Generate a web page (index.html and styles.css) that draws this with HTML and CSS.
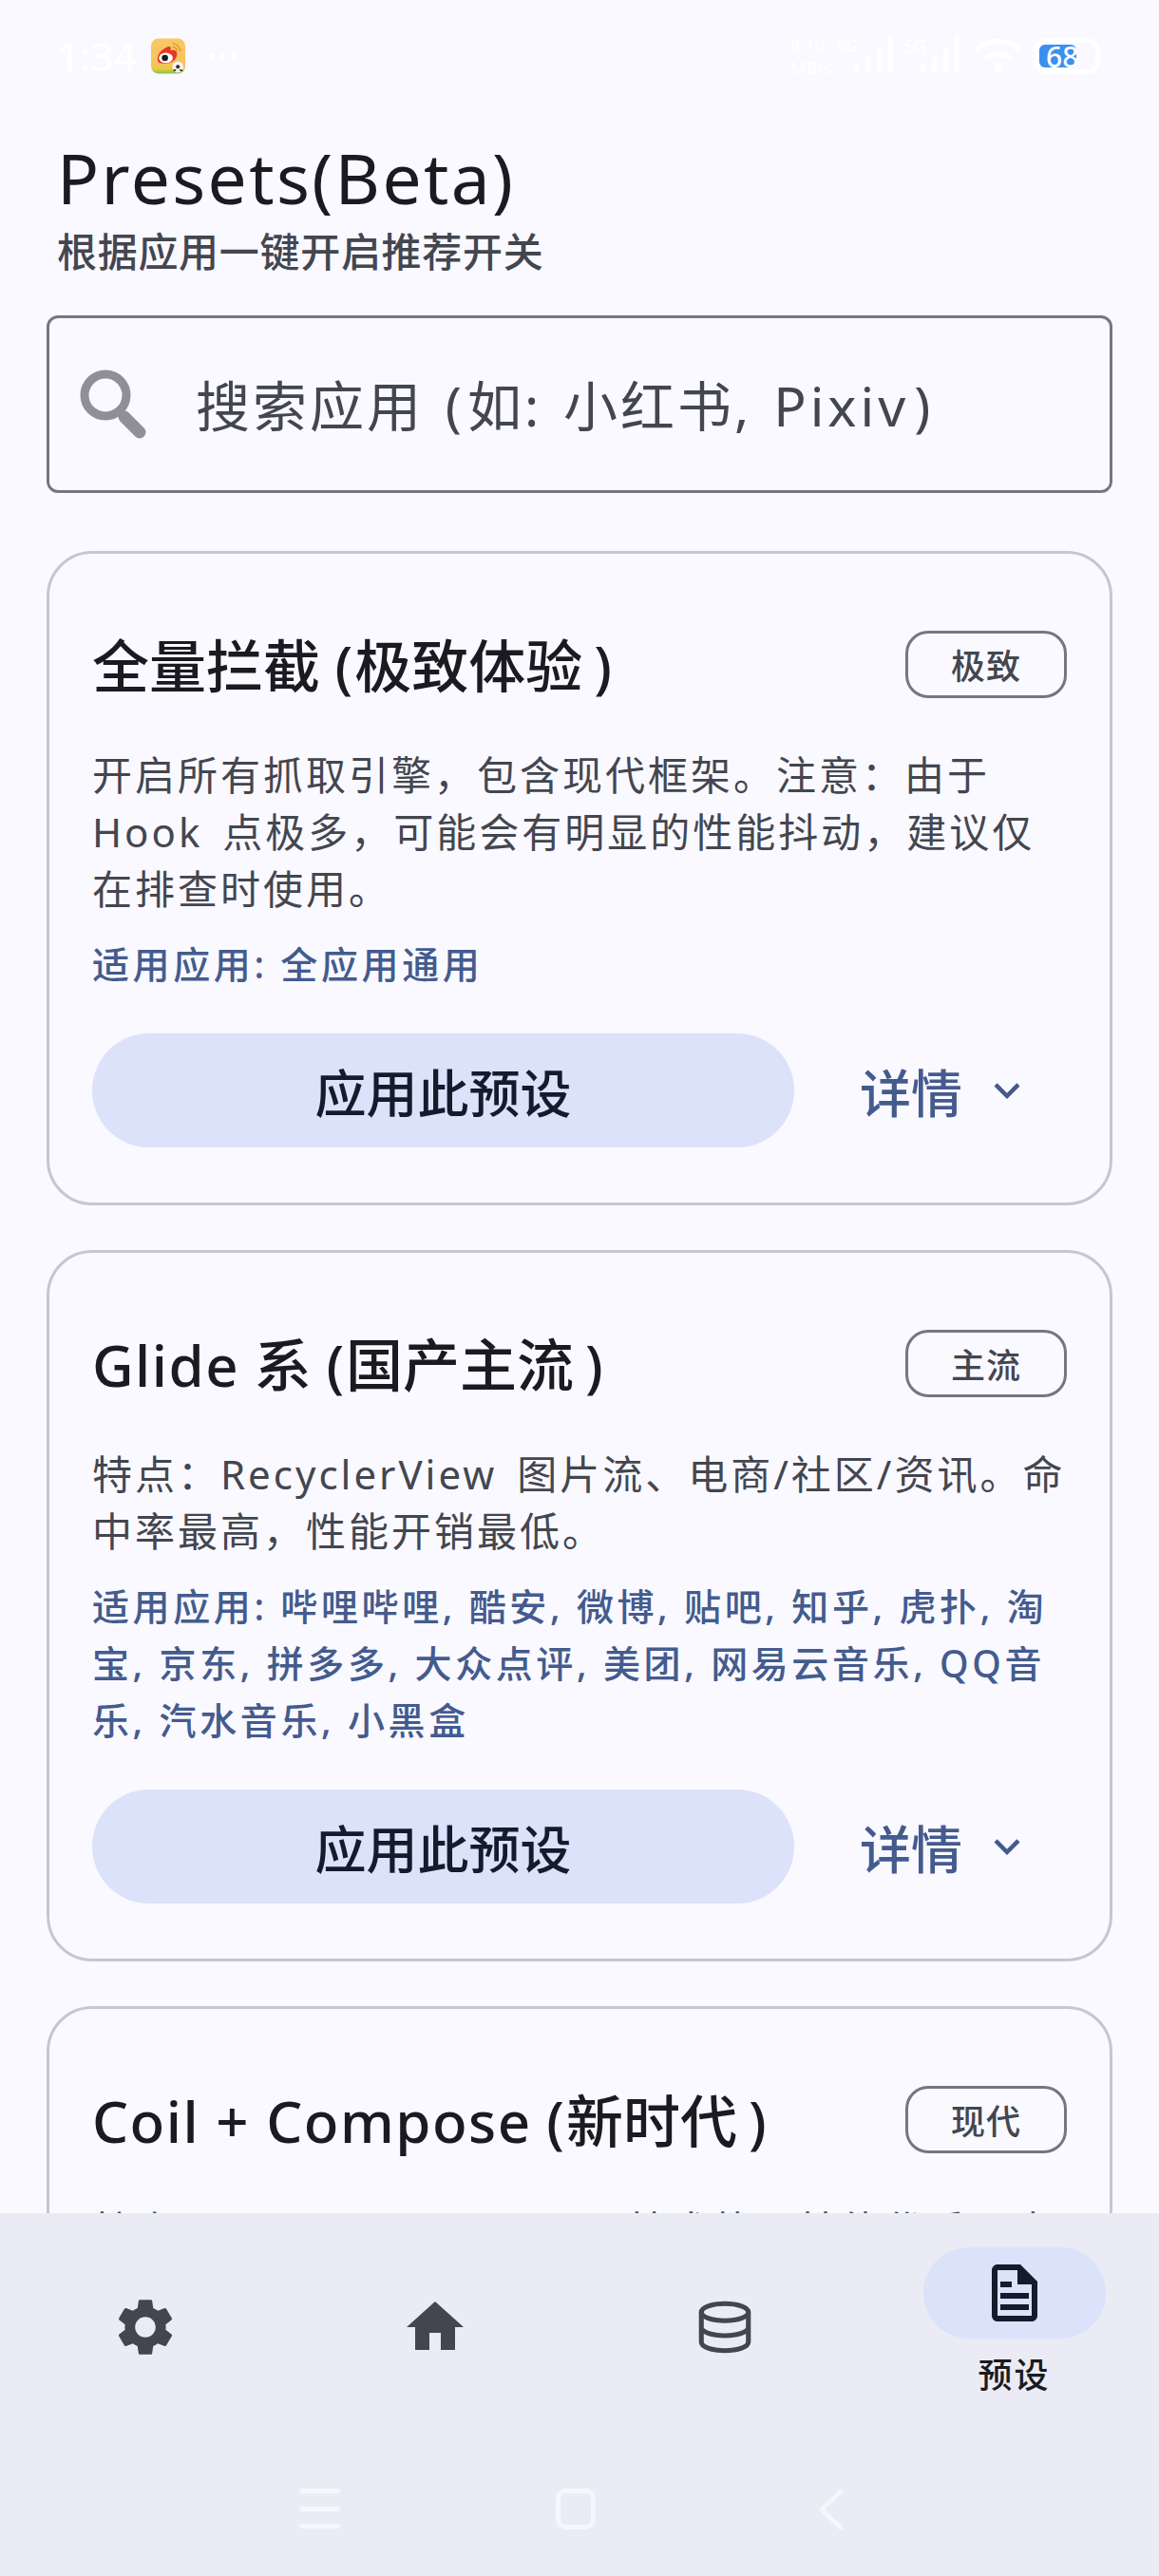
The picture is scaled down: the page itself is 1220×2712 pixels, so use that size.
FILE: index.html
```html
<!DOCTYPE html>
<html lang="zh-CN">
<head>
<meta charset="utf-8">
<title>Presets(Beta)</title>
<link rel="stylesheet" href="styles.css">
</head>
<body>
<div class="app">
  <div class="status">
    <div class="status-left">
      <span class="clock">1:34</span>
      <svg class="weibo" viewBox="0 0 38 38">
        <defs><linearGradient id="wb" x1="0" y1="0" x2="0" y2="1"><stop offset="0" stop-color="#f8c768"/><stop offset=".72" stop-color="#f6c45c"/><stop offset=".88" stop-color="#e9c83e"/><stop offset="1" stop-color="#7fc24a"/></linearGradient></defs>
        <rect width="37" height="38" rx="8" fill="url(#wb)"/>
        <path d="M7 22c0-6 6-11 11-13 3-1 4 1 3 4 4-1 7 0 7 4 0 6-6 10-12 10S7 27 7 22z" fill="#e6372b"/>
        <ellipse cx="16" cy="21" rx="7.5" ry="5.5" fill="#fff"/>
        <circle cx="15" cy="21" r="3.4" fill="#1b1b1b"/>
        <path d="M23 5c5 1 8 4 9 9M23 9c3 .6 5 2.4 5.6 5" fill="none" stroke="#e89a2a" stroke-width="1.5"/>
        <circle cx="29" cy="31" r="6" fill="#f4f4f4"/>
        <circle cx="29" cy="30.5" r="2" fill="#2a2a2a"/>
        <path d="M24 35l3-1M34 35l-3-1" stroke="#2a2a2a" stroke-width="1.6"/>
      </svg>
      <span class="dots"><i></i><i></i><i></i></span>
    </div>
    <div class="status-right">
      <span class="speed">8.10<br>MB/s</span>
      <span class="sig"><b>5G</b><svg viewBox="0 0 50 44" class="bars"><path d="M2 32h6v10H2zM15 24h6v18h-6zM28 12h6v30h-6zM41 0h6v42h-6z"/></svg></span>
      <span class="sig"><b>5G</b><svg viewBox="0 0 50 44" class="bars"><path d="M2 32h6v10H2zM15 24h6v18h-6zM28 12h6v30h-6zM41 0h6v42h-6z"/></svg></span>
      <svg class="wifi" viewBox="0 0 50 40"><path d="M2 12C15 1 35 1 48 12M12 22c8-6 18-6 26 0" fill="none" stroke="#fff" stroke-width="6" stroke-linecap="round"/><circle cx="25" cy="33" r="5" fill="#fff"/></svg>
      <span class="battery"><span class="level"></span><span class="pct">68</span></span>
    </div>
  </div>

  <main class="content">
    <h1 class="title">Presets(Beta)</h1>
    <p class="subtitle">根据应用一键开启推荐开关</p>

    <div class="search">
      <svg class="search-icon" viewBox="0 0 72 74"><circle cx="27" cy="27" r="22" fill="none" stroke="#8f9096" stroke-width="9"/><path d="M47 50l16 16" stroke="#8f9096" stroke-width="13" stroke-linecap="round"/></svg>
      <span class="placeholder">搜索应用 <span class="open">(</span>如: 小红书, <span class="latin-ph">Pixiv</span><span class="close">)</span></span>
    </div>

    <section class="card">
      <div class="card-head">
        <h2 class="card-title">全量拦截 <span class="open">(</span>极致体验<span class="close">)</span></h2>
        <span class="badge">极致</span>
      </div>
      <p class="desc">开启所有抓取引擎，包含现代框架。注意：由于 Hook 点极多，可能会有明显的性能抖动，建议仅在排查时使用。</p>
      <p class="apps">适用应用: 全应用通用</p>
      <div class="actions">
        <button class="apply">应用此预设</button>
        <button class="details">详情<svg class="chev" viewBox="0 0 24 24"><path d="M16.59 8.59 12 13.17 7.41 8.59 6 10l6 6 6-6z"/></svg></button>
      </div>
    </section>

    <section class="card">
      <div class="card-head">
        <h2 class="card-title"><span class="latin">Glide</span> 系 <span class="open">(</span>国产主流<span class="close">)</span></h2>
        <span class="badge">主流</span>
      </div>
      <p class="desc">特点：RecyclerView 图片流、电商/社区/资讯。命中率最高，性能开销最低。</p>
      <p class="apps">适用应用: 哔哩哔哩, 酷安, 微博, 贴吧, 知乎, 虎扑, 淘宝, 京东, 拼多多, 大众点评, 美团, 网易云音乐, QQ音乐, 汽水音乐, 小黑盒</p>
      <div class="actions">
        <button class="apply">应用此预设</button>
        <button class="details">详情<svg class="chev" viewBox="0 0 24 24"><path d="M16.59 8.59 12 13.17 7.41 8.59 6 10l6 6 6-6z"/></svg></button>
      </div>
    </section>

    <section class="card">
      <div class="card-head">
        <h2 class="card-title"><span class="latin">Coil + Compose</span> <span class="open">(</span>新时代<span class="close">)</span></h2>
        <span class="badge">现代</span>
      </div>
      <p class="desc">特点：Kotlin + Compose 技术栈，性能优秀，内存占用更低。</p>
    </section>
  </main>

  <nav class="nav">
    <div class="tabs">
      <div class="tab">
        <span class="tab-icon"><svg viewBox="0 0 24 24"><path d="M19.14 12.94c.04-.3.06-.61.06-.94 0-.32-.02-.64-.07-.94l2.03-1.58c.18-.14.23-.41.12-.61l-1.92-3.32c-.12-.22-.37-.29-.59-.22l-2.39.96c-.5-.38-1.03-.7-1.62-.94l-.36-2.54c-.04-.24-.24-.41-.48-.41h-3.84c-.24 0-.43.17-.47.41l-.36 2.54c-.59.24-1.13.57-1.62.94l-2.39-.96c-.22-.08-.47 0-.59.22L2.74 8.87c-.12.21-.08.47.12.61l2.03 1.58c-.05.3-.09.63-.09.94s.02.64.07.94l-2.03 1.58c-.18.14-.23.41-.12.61l1.92 3.32c.12.22.37.29.59.22l2.39-.96c.5.38 1.03.7 1.62.94l.36 2.54c.05.24.24.41.48.41h3.84c.24 0 .44-.17.47-.41l.36-2.54c.59-.24 1.13-.56 1.62-.94l2.39.96c.22.08.47 0 .59-.22l1.92-3.32c.12-.22.07-.47-.12-.61l-2.01-1.58zM12 15.6c-1.98 0-3.6-1.62-3.6-3.6s1.62-3.6 3.6-3.6 3.6 1.62 3.6 3.6-1.62 3.6-3.6 3.6z"/></svg></span>
      </div>
      <div class="tab">
        <span class="tab-icon"><svg viewBox="0 0 24 24"><path d="M10 20v-6h4v6h5v-8h3L12 3 2 12h3v8z"/></svg></span>
      </div>
      <div class="tab">
        <span class="tab-icon"><svg viewBox="0 0 24 24" class="db"><ellipse cx="12" cy="6.75" rx="8.25" ry="3"/><path d="M3.75 6.75v10.5c0 1.66 3.69 3 8.25 3s8.25-1.34 8.25-3V6.75M3.75 12c0 1.66 3.69 3 8.25 3s8.25-1.34 8.25-3"/></svg></span>
      </div>
      <div class="tab tab-active">
        <span class="pill"><svg viewBox="0 0 24 24"><path fill-rule="evenodd" d="M14 2H6c-1.1 0-2 .9-2 2v16c0 1.1.9 2 2 2h12c1.1 0 2-.9 2-2V8l-6-6zM6 20V4h7v5h5v11H6z"/><path d="M7 8h4v2H7zM7 12h10v2H7zM7 16h10v2H7z"/></svg></span>
        <span class="tab-label">预设</span>
      </div>
    </div>
    <div class="sysnav">
      <span class="sys-menu"><i></i><i></i><i></i></span>
      <span class="sys-home"></span>
      <svg class="sys-back" viewBox="0 0 28 44"><path d="M24 3 4 22l20 19" fill="none" stroke="#f6f7fc" stroke-width="5" stroke-linecap="round" stroke-linejoin="round"/></svg>
    </div>
  </nav>
</div>
</body>
</html>
```

FILE: styles.css
```css
* { box-sizing: border-box; }
html, body { margin: 0; padding: 0; }
body {
  background: #f9f9ff;
  color: #1a1b20;
  font-family: "Noto Sans", "Noto Sans CJK SC", sans-serif;
}
.app { height: 100vh; display: flex; flex-direction: column; overflow: hidden; }

.status { height: 118px; flex: none; display: flex; justify-content: space-between; align-items: flex-start; padding: 40px 62px 0 60px; color: #fff; }
.status-left { display: flex; align-items: center; gap: 24px; height: 38px; }
.clock { font-size: 42px; font-weight: 500; line-height: 38px; width: 75px; }
.weibo { width: 37px; height: 38px; }
.dots { display: flex; gap: 6px; }
.dots i { width: 6px; height: 6px; border-radius: 50%; background: #fff; }
.status-right { display: flex; align-items: center; height: 38px; }
.speed { font-size: 18px; line-height: 24px; font-weight: 500; width: 48px; white-space: nowrap; }
.sig { position: relative; display: block; width: 64px; height: 38px; }
.sig + .sig { margin-left: 8px; width: 62px; }
.sig b { position: absolute; left: 0; top: -4px; font-size: 18px; font-weight: 500; }
.bars { position: absolute; right: 0; bottom: 0; width: 48px; height: 40px; fill: #fff; }
.wifi { width: 48px; height: 38px; margin: 0 13px; }
.battery { position: relative; width: 70px; height: 38px; border: 5px solid #fff; border-radius: 13px; }
.level { position: absolute; left: 1px; top: 2px; width: 39px; height: 24px; background: #3b8fee; border-radius: 6px; }
.pct { position: absolute; left: 8px; top: -4px; font-size: 30px; line-height: 38px; font-weight: 500; color: #fff; }

.content { flex: 1; min-height: 0; overflow: hidden; padding: 0 49px; }
.title { margin: 25px 0 0 11px; font-size: 73px; line-height: 88px; font-weight: 400; letter-spacing: 2.4px; color: #1a1b20; }
.subtitle { margin: 4px 0 0 11px; font-size: 42px; line-height: 60px; font-weight: 500; letter-spacing: .7px; color: #44464f; }

.search { margin-top: 37px; height: 187px; display: flex; align-items: center; border: 3px solid #757680; border-radius: 12px; padding: 0 0 0 32px; }
.search-icon { width: 72px; height: 74px; flex: none; }
.placeholder { margin: 3px 0 0 50px; font-size: 57px; letter-spacing: 3px; word-spacing: 5px; line-height: 70px; color: #44464f; white-space: nowrap; }
.placeholder .open { margin-right: 3px; }
.placeholder .close { margin-left: 5px; }
.latin-ph { letter-spacing: 4px; }

.card { margin-top: 61px; border: 3px solid #c5c6d0; border-radius: 48px; padding: 81px 45px 58px; }
.card + .card { margin-top: 47px; }
.card-head { display: flex; justify-content: space-between; align-items: center; height: 71px; }
.card-title { margin: 3px 0 0; font-size: 60px; line-height: 71px; font-weight: 500; color: #1a1b20; white-space: nowrap; }
.card-title .open { margin-right: 2px; }
.card-title .close { margin-left: 12px; }
.latin { letter-spacing: 1.5px; }
.badge { flex: none; width: 170px; height: 71px; display: flex; align-items: center; justify-content: center; border: 3px solid #757680; border-radius: 24px; font-size: 36px; letter-spacing: 1px; font-weight: 500; color: #44464f; }
.desc { margin: 51px 0 0; font-size: 42px; line-height: 60px; letter-spacing: 3px; word-spacing: 7px; color: #44464f; }
.apps { margin: 19px 0 0; font-size: 39px; line-height: 60px; letter-spacing: 3.6px; font-weight: 500; color: #445b8e; }
.actions { margin-top: 43px; display: flex; align-items: center; }
.apply { width: 739px; height: 120px; border: 0; border-radius: 60px; background: #dbe2f9; color: #141b2c; font: inherit; font-size: 54px; font-weight: 500; }
.details { display: flex; align-items: center; margin-left: 69px; padding: 0; border: 0; background: none; font: inherit; font-size: 54px; font-weight: 500; color: #445b8e; }
.chev { width: 54px; height: 54px; margin-left: 20px; fill: #445b8e; }

.nav { flex: none; height: 382px; background: #ebebf5; display: flex; flex-direction: column; }
.tabs { display: grid; grid-template-columns: repeat(4, 1fr); height: 270px; }
.tab { display: flex; flex-direction: column; align-items: center; padding-top: 84px; }
.tab-icon { width: 72px; height: 72px; }
.tab-icon svg { display: block; width: 72px; height: 72px; fill: #44464f; }
.tab-icon .db { fill: none; stroke: #44464f; stroke-width: 1.7; }
.tab-active { padding-top: 36px; }
.pill { width: 192px; height: 96px; border-radius: 48px; background: #dbe2f9; display: flex; align-items: center; justify-content: center; }
.pill svg { width: 72px; height: 72px; fill: #141b2c; }
.tab-label { margin-top: 14px; font-size: 36px; line-height: 50px; letter-spacing: 2px; font-weight: 500; color: #1a1b20; }

.sysnav { flex: 1; display: flex; align-items: flex-start; padding-top: 20px; }
.sys-menu { margin-left: 315px; width: 43px; height: 42px; display: flex; flex-direction: column; justify-content: space-between; }
.sys-menu i { display: block; height: 5px; border-radius: 2px; background: #f6f7fc; }
.sys-home { margin-left: 227px; width: 42px; height: 43px; border: 5px solid #f6f7fc; border-radius: 10px; }
.sys-back { margin-left: 234px; width: 28px; height: 44px; }
```
